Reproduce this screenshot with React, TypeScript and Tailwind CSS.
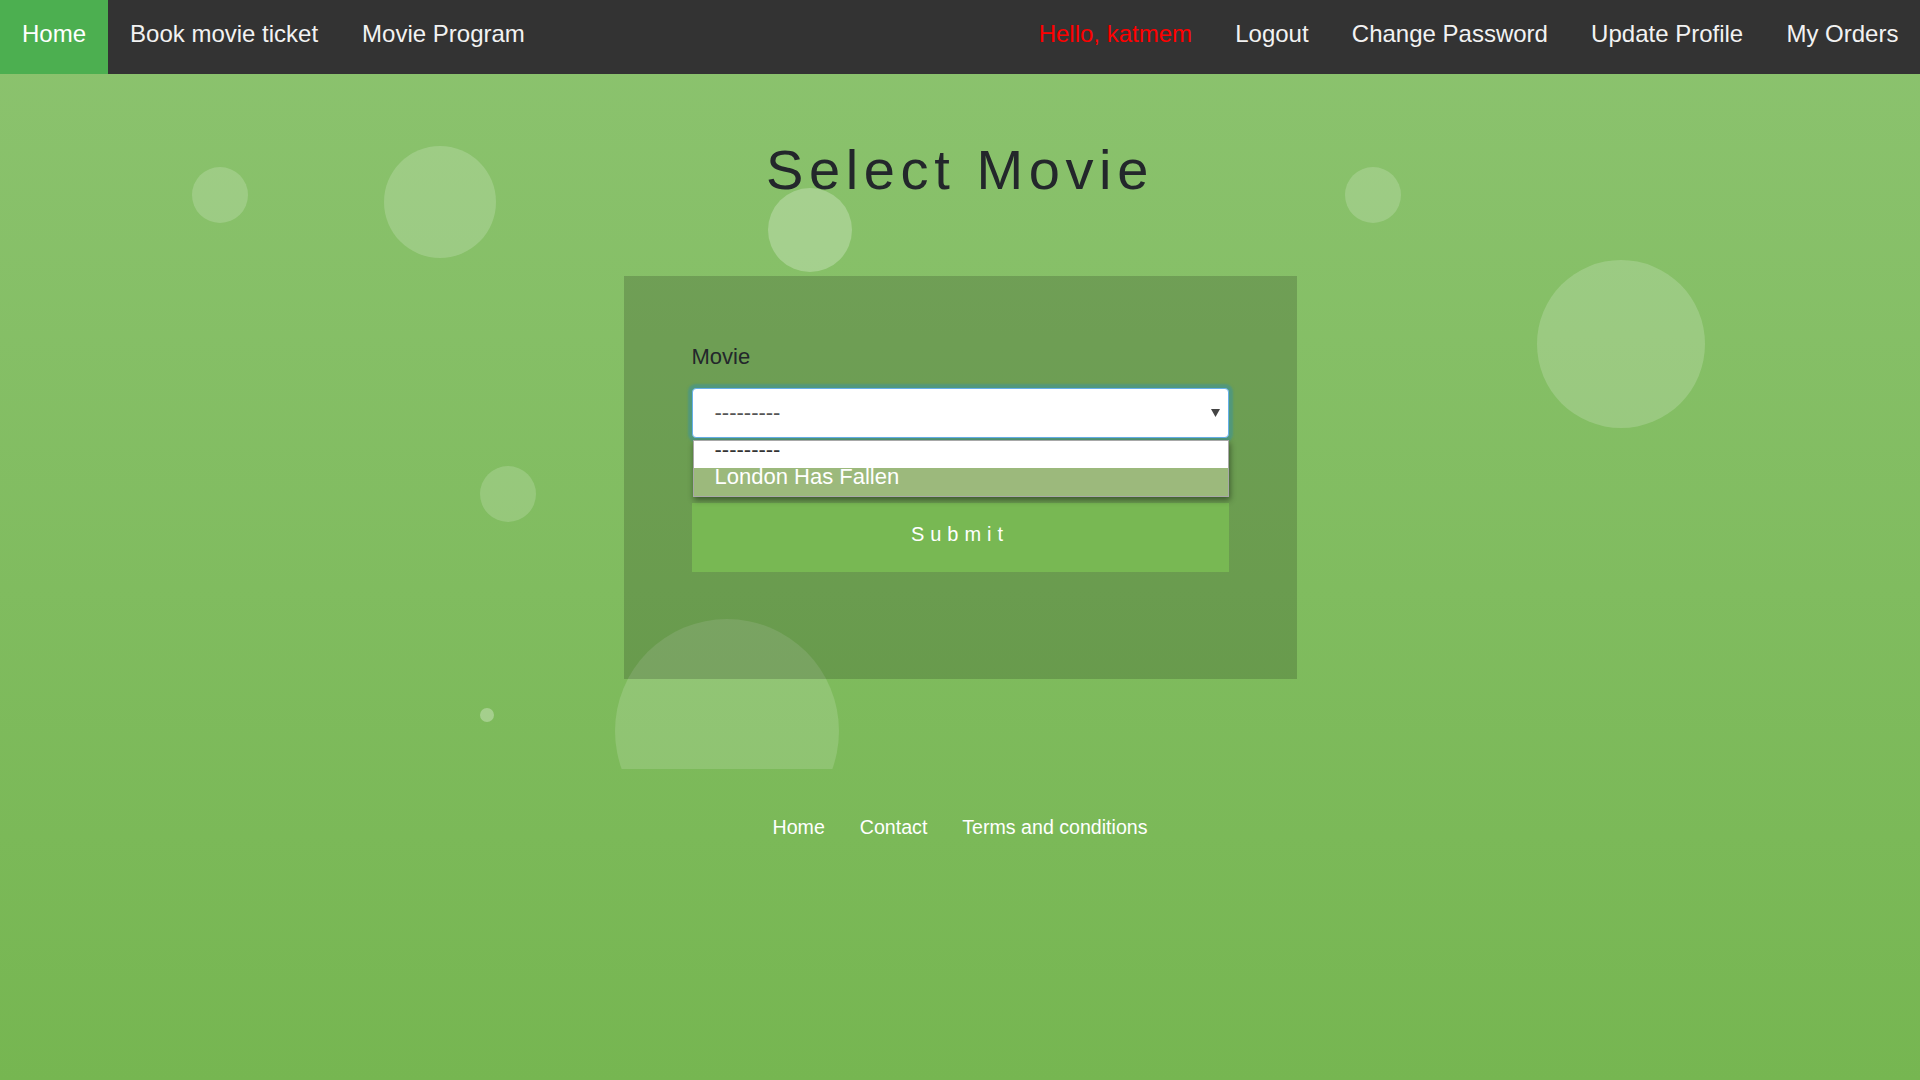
const navLeft = ["Book movie ticket", "Movie Program"];
const navRight = ["Logout", "Change Password", "Update Profile", "My Orders"];

// decorative bubbles behind the form, measured off the page
const bubbles = [
  { cls: "left-[192px] top-[93px] w-[56px] h-[56px] bg-white/[0.18]" },
  { cls: "left-[384px] top-[72px] w-[112px] h-[112px] bg-white/[0.18]" },
  { cls: "left-[768px] top-[114px] w-[84px] h-[84px] bg-white/[0.25]" },
  { cls: "left-[480px] top-[392px] w-[56px] h-[56px] bg-white/[0.17]" },
  { cls: "left-[480px] top-[634px] w-[14px] h-[14px] bg-white/[0.3]" },
  { cls: "left-[615px] top-[545px] w-[224px] h-[224px] bg-white/[0.15]" },
  { cls: "left-[1345px] top-[93px] w-[56px] h-[56px] bg-white/[0.18]" },
  { cls: "left-[1537px] top-[186px] w-[168px] h-[168px] bg-white/[0.18]" },
];

const App = () => {
  return (
    <div className="min-h-screen flex flex-col font-['Liberation_Sans',Arial,sans-serif] bg-gradient-to-b from-[#8cc36f] to-[#76b651]">
      <nav className="h-[74px] bg-[#333333] flex text-[24px] leading-[27px] text-[#f2f2f2]">
        <a className="h-full px-[22px] pt-[20px] bg-[#4caf50] text-white">Home</a>
        {navLeft.map((item) => (
          <a key={item} className="h-full px-[22px] pt-[20px]">
            {item}
          </a>
        ))}
        <div className="ml-auto flex">
          <a className="h-full px-[21.6px] pt-[20px] text-[#ff0000]">Hello, katmem</a>
          {navRight.map((item) => (
            <a key={item} className="h-full px-[21.6px] pt-[20px]">
              {item}
            </a>
          ))}
        </div>
      </nav>

      <section className="relative h-[695px] overflow-hidden">
        {bubbles.map((b, i) => (
          <div key={i} className={"absolute rounded-full " + b.cls}></div>
        ))}

        <div className="relative z-10 flex flex-col items-center pt-[68px]">
          <h1 className="text-[56px] leading-[56px] tracking-[5.6px] text-[#23272b] font-normal">
            Select Movie
          </h1>

          <form className="mt-[78px] w-[673px] bg-black/[0.17] px-[68px] pt-[68px] pb-[107px]">
            <label className="block text-[22px] leading-[26px] text-[#23272b]">Movie</label>
            <div className="relative mt-[18px]">
              <div className="h-[50px] bg-white rounded-[4px] border border-[#66afe9] shadow-[0_0_2px_4px_rgba(64,148,150,0.6)] flex items-center pl-[22px] pr-[8px] pb-[2px]">
                <span className="text-[22px] text-[#555555] flex-1">---------</span>
                <svg width="9" height="9" viewBox="0 0 9 9">
                  <path d="M0 1 L9 1 L4.5 9 Z" fill="#444" />
                </svg>
              </div>
              <div className="absolute left-[1px] right-0 top-[52px] z-20 border border-[#a8a8a8] bg-white shadow-[1px_3px_6px_rgba(0,0,0,0.45)] text-[22px]">
                <div className="h-[27px] leading-[18px] pl-[21px] text-[#333333]">---------</div>
                <div className="h-[28px] leading-[18px] pl-[21px] bg-[#9cb97c] text-white">London Has Fallen</div>
              </div>
            </div>
            <button
              type="button"
              className="mt-[65px] w-full h-[69px] pb-[7px] bg-[#78b853] text-white text-[20px] tracking-[6px]"
            >
              Submit
            </button>
          </form>
        </div>
      </section>

      <footer className="mt-[47px] flex justify-center gap-[35px] text-[19.6px] leading-[22px] text-white">
        <a>Home</a>
        <a>Contact</a>
        <a>Terms and conditions</a>
      </footer>
    </div>
  );
};

export default App;
